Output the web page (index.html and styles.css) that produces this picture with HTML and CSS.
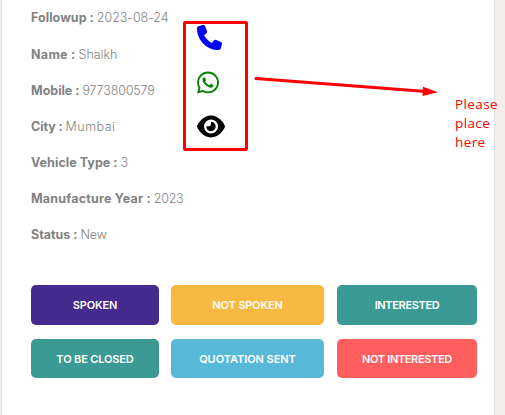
FILE: index.html
```html
<!DOCTYPE html>
<html lang="en">
<head>
<meta charset="utf-8">
<title>Lead details</title>
<link rel="stylesheet" href="styles.css">
</head>
<body>
<main class="card">
  <div class="lead">
    <dl class="details">
      <div class="row followup"><dt>Followup :</dt><dd>2023-08-24</dd></div>
      <div class="row name"><dt>Name :</dt><dd>Shaikh</dd></div>
      <div class="row mobile"><dt>Mobile :</dt><dd>9773800579</dd></div>
      <div class="row city"><dt>City :</dt><dd>Mumbai</dd></div>
      <div class="row vehicle"><dt>Vehicle Type :</dt><dd>3</dd></div>
      <div class="row year"><dt>Manufacture Year :</dt><dd>2023</dd></div>
      <div class="row status"><dt>Status :</dt><dd>New</dd></div>
    </dl>
    <div class="actions">
      <svg class="phone" viewBox="0 0 512 512"><path d="M164.9 24.6c-7.700-18.600-28-28.500-47.400-23.200l-88 24C12.100 30.200 0 46 0 64C0 311.400 200.600 512 448 512c18 0 33.800-12.100 38.600-29.500l24-88c5.300-19.400-4.600-39.700-23.200-47.400l-96-40c-16.300-6.800-35.200-2.100-46.300 11.600L304.700 368C234.300 334.700 177.300 277.700 144 207.300L193.300 167c13.700-11.200 18.400-30 11.600-46.300l-40-96z"/></svg>
      <svg class="whatsapp" viewBox="0 0 448 512"><path d="M380.9 97.1C339 55.1 283.2 32 223.9 32c-122.4 0-222 99.6-222 222 0 39.1 10.2 77.3 29.6 111L0 480l117.7-30.9c32.4 17.7 68.9 27 106.1 27h.1c122.3 0 224.1-99.6 224.1-222 0-59.3-25.2-115-67.1-157zm-157 341.6c-33.2 0-65.7-8.9-94-25.7l-6.7-4-69.8 18.3L72 359.2l-4.4-7c-18.5-29.4-28.2-63.3-28.2-98.2 0-101.7 82.8-184.5 184.6-184.5 49.3 0 95.6 19.2 130.4 54.1 34.8 34.9 56.2 81.2 56.1 130.5 0 101.8-84.9 184.6-186.6 184.6zm101.2-138.2c-5.5-2.8-32.8-16.2-37.9-18-5.1-1.9-8.8-2.8-12.5 2.8-3.7 5.6-14.3 18-17.6 21.8-3.2 3.7-6.5 4.2-12 1.4-32.6-16.3-54-29.1-75.5-66-5.7-9.8 5.7-9.1 16.3-30.3 1.8-3.7.9-6.9-.5-9.7-1.4-2.8-12.5-30.1-17.1-41.2-4.5-10.8-9.1-9.3-12.5-9.5-3.2-.2-6.9-.2-10.6-.2-3.7 0-9.7 1.4-14.8 6.9-5.1 5.6-19.4 19-19.4 46.3 0 27.3 19.9 53.7 22.6 57.4 2.8 3.7 39.1 59.7 94.8 83.8 35.2 15.2 49 16.5 66.6 13.9 10.7-1.6 32.8-13.4 37.4-26.4 4.6-13 4.6-24.1 3.2-26.4-1.3-2.5-5-3.9-10.5-6.6z"/></svg>
      <svg class="eye" viewBox="0 0 576 512"><path d="M288 32c-80.8 0-145.5 36.8-192.6 80.6C48.6 156 17.3 208 2.5 243.7c-3.3 7.9-3.3 16.7 0 24.6C17.3 304 48.6 356 95.4 399.4C142.5 443.2 207.2 480 288 480s145.5-36.8 192.6-80.6c46.8-43.5 78.1-95.4 93-131.1c3.3-7.9 3.3-16.7 0-24.6c-14.9-35.7-46.2-87.7-93-131.1C433.5 68.8 368.8 32 288 32zM144 256a144 144 0 1 1 288 0 144 144 0 1 1 -288 0zm144-64c0 35.3-28.7 64-64 64c-7.1 0-13.9-1.2-20.3-3.3c-5.5-1.8-11.9 1.6-11.7 7.4c.3 6.9 1.3 13.8 3.2 20.7c13.7 51.2 66.4 81.6 117.6 67.9s81.6-66.4 67.9-117.6c-11.1-41.5-47.8-69.4-88.6-71.1c-5.8-.2-9.2 6.1-7.4 11.7c2.1 6.4 3.3 13.2 3.3 20.3z"/></svg>
    </div>
  </div>
  <div class="buttons">
    <button class="purple">SPOKEN</button>
    <button class="amber">NOT SPOKEN</button>
    <button class="teal last">INTERESTED</button>
    <button class="teal">TO BE CLOSED</button>
    <button class="sky">QUOTATION SENT</button>
    <button class="coral last">NOT INTERESTED</button>
  </div>
</main>
<svg class="arrow" viewBox="0 0 186 22"><path class="shaft" d="M3 4.5L170 17.2"/><path d="M170 12.800L185 18.200L169.500 22Z"/></svg>
<p class="note">Please<br>place<br>here</p>
</body>
</html>
```
FILE: styles.css
```css
* { box-sizing: border-box; }
body {
  margin: 0;
  height: 415px;
  overflow: hidden;
  position: relative;
  background: #f2eeea;
  font-family: Inter, "Liberation Sans", sans-serif;
}
.card {
  height: 415px;
  margin: 0 10px 0 1px;
  border: solid #e5e5e5;
  border-width: 0 1px;
  padding: 0 17px 0 29px;
  background: #fff;
}
.lead { display: flex; height: 285px; }
.details { width: 152px; margin: 0; }
.row {
  display: flex;
  height: 36px;
  align-items: center;
  gap: 3px;
  color: #828282;
  font-size: 12.5px;
  line-height: 16px;
  white-space: nowrap;
}
.row:first-child { height: 37px; padding-bottom: 1px; }
dt { font-weight: 700; letter-spacing: 0.05px; }
dd { margin: 0; font-weight: 350; letter-spacing: -0.05px; }
.name dt { letter-spacing: 0.3px; }
.year dt { letter-spacing: 0.2px; }
.city dt { letter-spacing: -0.1px; }
.mobile dt, .status dt { letter-spacing: -0.02px; }
.mobile dd { letter-spacing: -0.15px; }
.year dd { letter-spacing: -0.25px; }
.city dd { letter-spacing: 0.5px; }
.actions {
  display: flex;
  flex-direction: column;
  flex: none;
  width: 65px;
  height: 130px;
  margin-top: 21px;
  padding: 1px 11px;
  border: 3px solid #f00;
  border-radius: 2px;
}
.actions svg { height: 25px; flex: none; }
.phone { width: 25px; fill: #00f; }
.whatsapp { width: 22px; margin-top: 20px; fill: green; }
.eye { width: 28px; margin-top: 19px; fill: #000; }
.buttons {
  display: grid;
  grid-template-columns: 128px 153px 141px;
  grid-template-rows: 40px 39px;
  column-gap: 12px;
  row-gap: 14px;
}
button {
  border: 0;
  padding: 0;
  border-radius: 5px;
  color: #fff;
  font: 600 11px Inter, "Liberation Sans", sans-serif;
  letter-spacing: -0.15px;
}
.last { margin-left: 1px; letter-spacing: -0.35px; }
.sky { letter-spacing: -0.05px; }
.purple { background: #452b8e; }
.amber { background: #f8b942; }
.teal { background: #3b9a93; }
.sky { background: #58b8d8; }
.coral { background: #ff5e5e; }
.arrow {
  position: absolute;
  left: 253px;
  top: 74px;
  width: 186px;
  height: 22px;
  fill: #f00;
}
.shaft { stroke: #f00; stroke-width: 3; stroke-linecap: round; }
.note {
  position: absolute;
  left: 455px;
  top: 95px;
  margin: 0;
  color: #f00;
  font: 13.5px/19px "Open Sans", sans-serif;
  letter-spacing: 0.4px;
}
```
